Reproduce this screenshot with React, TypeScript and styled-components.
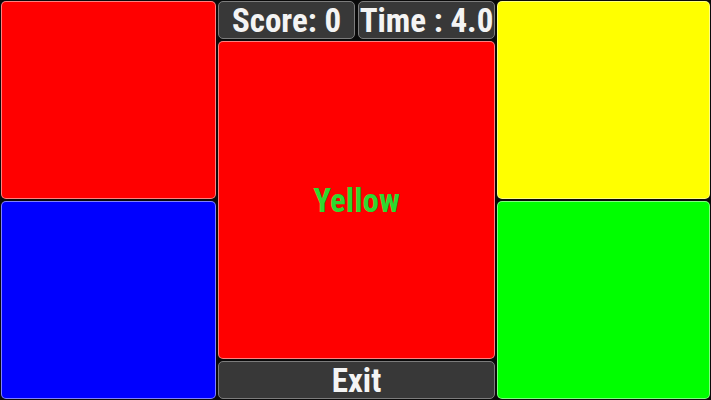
import React from 'react';
import styled, { createGlobalStyle } from 'styled-components';

const GlobalStyle = createGlobalStyle`
  html, body {
    margin: 0;
    padding: 0;
    background: #000;
  }
  #root {
    width: 711px;
    height: 400px;
  }
`;

const Board = styled.div`
  display: flex;
  gap: 2px;
  box-sizing: border-box;
  width: 711px;
  height: 400px;
  padding: 1px;
  background: #0a0a0a;
  font-family: Roboto, 'DejaVu Sans', sans-serif;
  font-stretch: condensed;
`;

const Column = styled.div<{ width?: number }>`
  display: flex;
  flex-direction: column;
  gap: 2px;
  min-width: 0;
  width: ${(props) => (props.width ? `${props.width}px` : 'auto')};
  flex: ${(props) => (props.width ? 'none' : '1')};
`;

const ColorTile = styled.button<{ color: string }>`
  flex: 1;
  margin: 0;
  padding: 0;
  border: 1px solid rgba(255, 255, 255, 0.5);
  border-radius: 5px;
  background-color: ${(props) => props.color};
  cursor: pointer;
`;

const Prompt = styled.div`
  flex: 1;
  display: flex;
  align-items: center;
  justify-content: center;
  border: 1px solid rgba(255, 255, 255, 0.5);
  border-radius: 5px;
  background-color: #ff0000;
  color: #2fd82f;
  font-size: 33px;
  font-weight: bold;
`;

const StatusRow = styled.div`
  display: flex;
  gap: 3px;
  height: 38px;
`;

const DarkBox = styled.div`
  flex: 1;
  min-width: 0;
  display: flex;
  align-items: center;
  justify-content: center;
  box-sizing: border-box;
  height: 38px;
  margin: 0;
  padding: 0;
  border: 1px solid #7c7c7c;
  border-radius: 5px;
  background-color: #383838;
  color: #f4f4f4;
  font-family: inherit;
  font-stretch: condensed;
  font-size: 33px;
  font-weight: bold;
  white-space: nowrap;
  overflow: hidden;
`;

const ExitButton = styled(DarkBox).attrs({ as: 'button' })`
  flex: none;
  width: 100%;
  cursor: pointer;
`;

const App: React.FC = () => {
  const score = 0;
  const time = 4.0;

  return (
    <>
      <GlobalStyle />
      <Board>
        <Column width={215}>
          <ColorTile color="#ff0000" aria-label="Red" />
          <ColorTile color="#0000ff" aria-label="Blue" />
        </Column>
        <Column width={277}>
          <StatusRow>
            <DarkBox>Score: {score}</DarkBox>
            <DarkBox>Time : {time.toFixed(1)}</DarkBox>
          </StatusRow>
          <Prompt>Yellow</Prompt>
          <ExitButton>Exit</ExitButton>
        </Column>
        <Column>
          <ColorTile color="#ffff00" aria-label="Yellow" />
          <ColorTile color="#00ff00" aria-label="Green" />
        </Column>
      </Board>
    </>
  );
};

export default App;
